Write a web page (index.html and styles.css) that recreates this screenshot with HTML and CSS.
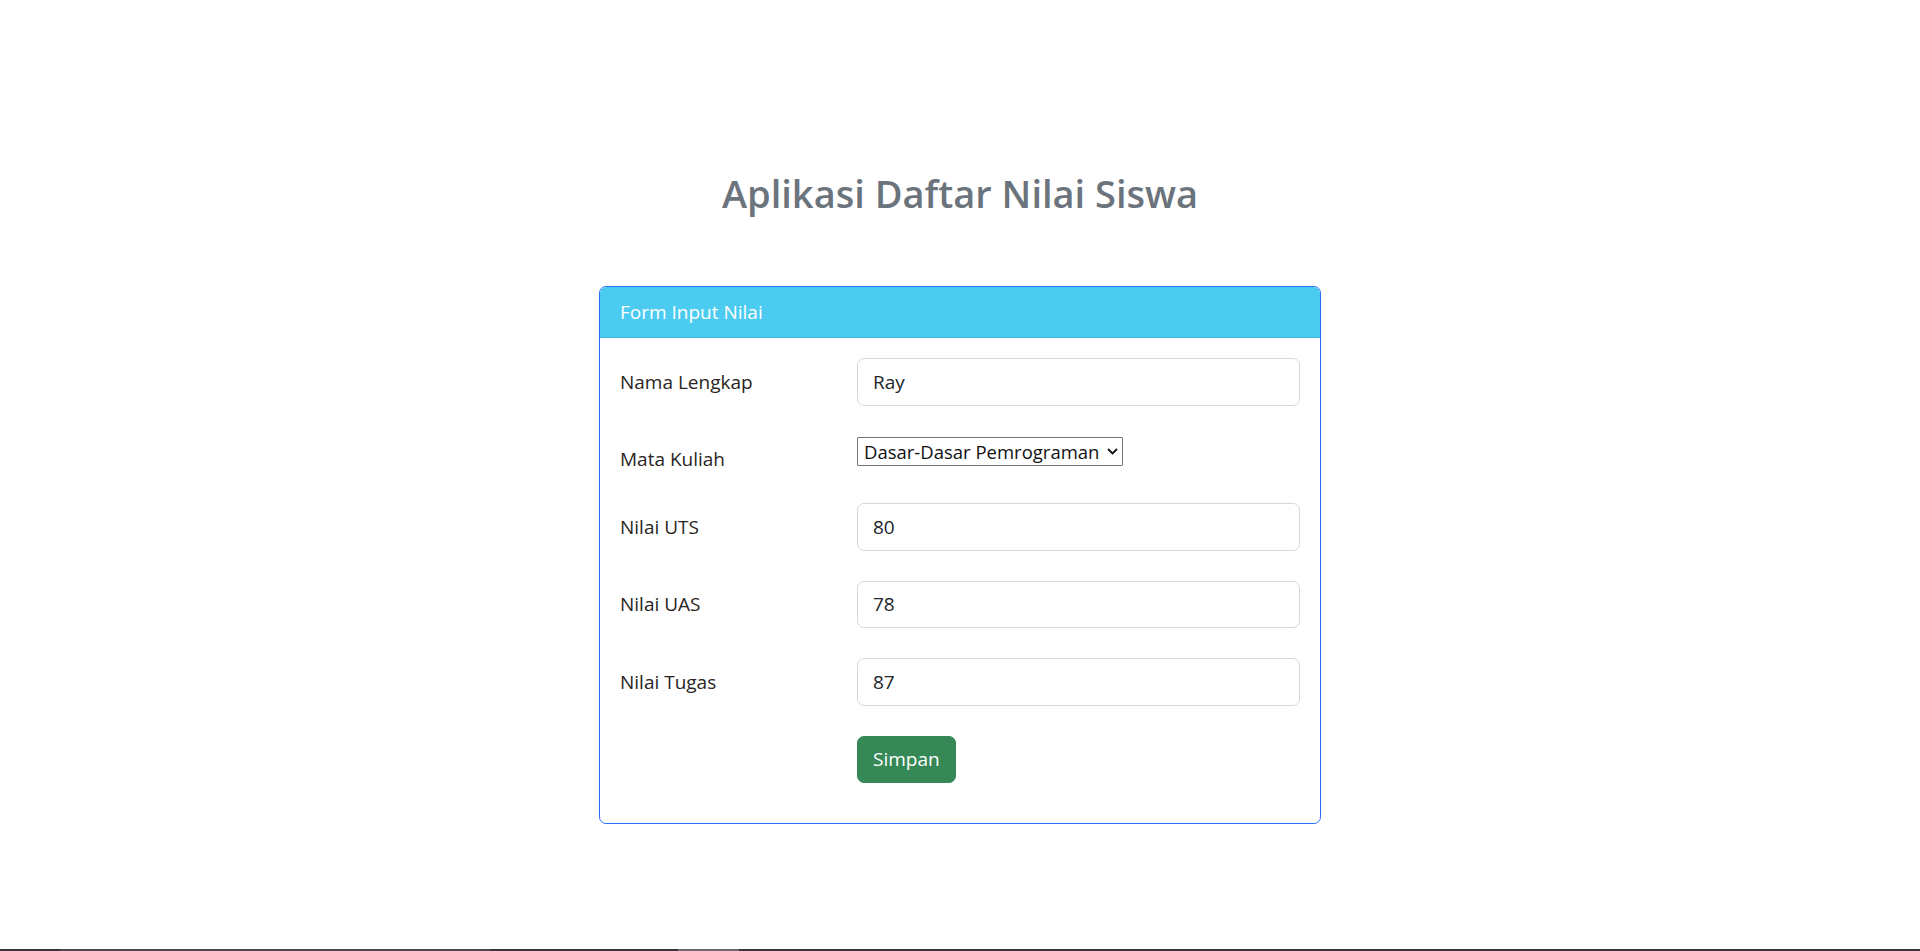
FILE: index.html
```html
<!DOCTYPE html>
<html lang="id">
<head>
<meta charset="utf-8">
<title>Aplikasi Daftar Nilai Siswa</title>
<link rel="stylesheet" href="styles.css">
</head>
<body>
<main class="page">
  <h2 class="title">Aplikasi Daftar Nilai Siswa</h2>
  <section class="card">
    <div class="card-header">Form Input Nilai</div>
    <form class="card-body">
      <div class="row row-gap-lg">
        <label class="label" for="nama">Nama Lengkap</label>
        <div class="field"><input class="input" id="nama" type="text" value="Ray"></div>
      </div>
      <div class="row row-gap-md">
        <label class="label label-select" for="matkul">Mata Kuliah</label>
        <div class="field">
          <span class="select-wrap">
            <select class="select" id="matkul">
              <option>Dasar-Dasar Pemrograman</option>
            </select>
            <svg class="chevron" width="11" height="7" viewBox="0 0 11 7" aria-hidden="true"><path d="M1 1l4.5 4.5L10 1" fill="none" stroke="#111" stroke-width="1.8"/></svg>
          </span>
        </div>
      </div>
      <div class="row row-gap-lg">
        <label class="label" for="uts">Nilai UTS</label>
        <div class="field"><input class="input" id="uts" type="text" value="80"></div>
      </div>
      <div class="row row-gap-lg">
        <label class="label" for="uas">Nilai UAS</label>
        <div class="field"><input class="input" id="uas" type="text" value="78"></div>
      </div>
      <div class="row row-gap-lg">
        <label class="label" for="tugas">Nilai Tugas</label>
        <div class="field"><input class="input" id="tugas" type="text" value="87"></div>
      </div>
      <div class="row row-gap-md">
        <span class="label"></span>
        <div class="field"><button class="btn" type="button">Simpan</button></div>
      </div>
    </form>
  </section>
</main>
<div class="taskbar">
  <span class="tb-seg tb-a"></span>
  <span class="tb-seg tb-b"></span>
  <span class="tb-seg tb-c"></span>
  <span class="tb-seg tb-d"></span>
  <span class="tb-seg tb-e"></span>
</div>
</body>
</html>
```
FILE: styles.css
```css
* { box-sizing: border-box; }

html, body {
  margin: 0;
  padding: 0;
}

body {
  height: 951px;
  display: flex;
  flex-direction: column;
  background: #ffffff;
  font-family: "Open Sans", "Noto Sans", sans-serif;
  color: #212529;
  font-size: 19px;
}

.page {
  flex: 1;
  padding-top: 169px;
}

.title {
  margin: 0 0 69px;
  text-align: center;
  font-size: 38px;
  line-height: 48px;
  font-weight: 600;
  color: #6b747c;
}

.card {
  width: 722px;
  margin: 0 auto;
  border: 1px solid #2b6ff9;
  border-radius: 7px;
  overflow: hidden;
}

.card-header {
  background: #4ccbf1;
  color: #ffffff;
  padding: 10px 20px;
  line-height: 30px;
  border-bottom: 1px solid #40b6dc;
}

.card-body {
  padding: 20px 20px 20px;
  margin: 0;
}

.row {
  display: grid;
  grid-template-columns: 237px 1fr;
}

.row-gap-lg { margin-bottom: 30px; }
.row-gap-md { margin-bottom: 20px; }

.label {
  padding-top: 8.75px;
  padding-bottom: 8.75px;
  line-height: 30px;
  color: #2a2522;
}

.input {
  display: block;
  width: 100%;
  height: 47.5px;
  padding: 0 15px;
  font: inherit;
  line-height: 30px;
  color: #212529;
  background: #ffffff;
  border: 1px solid #d3d8df;
  border-radius: 7px;
  outline: none;
}

.select-wrap {
  position: relative;
  display: inline-block;
  margin-top: 1px;
}

.select {
  appearance: none;
  -webkit-appearance: none;
  width: 266px;
  height: 29px;
  padding: 0 18px 0 6px;
  font-family: inherit;
  font-size: 18.5px;
  line-height: 27px;
  color: #111111;
  background: #ffffff;
  border: 1px solid #767676;
  border-radius: 1px;
}

.chevron {
  position: absolute;
  right: 5px;
  top: 11px;
}

.btn {
  height: 47px;
  padding: 0 15px;
  font: inherit;
  line-height: 30px;
  color: #ffffff;
  background: #368857;
  border: 1px solid #368857;
  border-radius: 7px;
}

.taskbar {
  height: 2px;
  display: flex;
  background: #363636;
}

.tb-seg { height: 2px; }
.tb-a { width: 60px; background: #363636; }
.tb-b { width: 430px; background: #4a4a4a; }
.tb-c { width: 188px; background: #363636; }
.tb-d { width: 61px; background: #686868; }
.tb-e { flex: 1; background: #363636; }
```
